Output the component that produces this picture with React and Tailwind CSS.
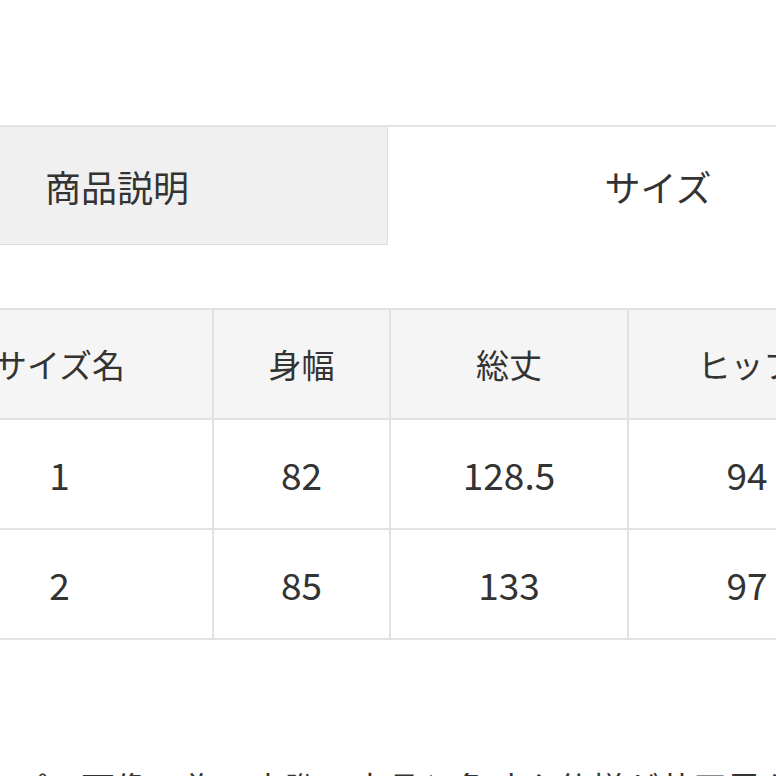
export default function App() {
  const font = { fontFamily: '"Noto Sans CJK JP", "Noto Sans", sans-serif' };
  const head = ["サイズ名", "身幅", "総丈", "ヒップ"];
  const rows = [
    ["1", "82", "128.5", "94"],
    ["2", "85", "133", "97"],
  ];
  const widths = ["w-[307px]", "w-[177px]", "w-[238px]", "w-[238px]"];
  return (
    <div className="w-[776px] h-[776px] overflow-hidden bg-white text-[#333]" style={font}>
      <div className="pt-[125px] ml-[-153px] w-[1200px]">
        <div className="flex border-t-2 border-[#e3e3e3]">
          <div className="w-[541px] h-[118px] bg-[#f0f0f0] border-r border-b border-[#dcdcdc] flex items-center justify-center text-[36px] leading-none">
            商品説明
          </div>
          <div className="w-[540px] h-[118px] bg-white flex items-center justify-center text-[36px] leading-none">
            サイズ
          </div>
        </div>
      </div>
      <div className="mt-[63px] ml-[-95px] w-max border-t-2 border-l-2 border-[#e2e2e2]">
        <div className="flex">
          {head.map((h, i) => (
            <div
              key={i}
              className={`${widths[i]} h-[110px] shrink-0 bg-[#f5f5f5] border-r-2 border-b-2 border-[#e2e2e2] flex items-center justify-center text-[33px] leading-none whitespace-nowrap`}
            >
              {h}
            </div>
          ))}
        </div>
        {rows.map((r, ri) => (
          <div key={ri} className="flex">
            {r.map((c, i) => (
              <div
                key={i}
                className={`${widths[i]} h-[110px] shrink-0 bg-white border-r-2 border-b-2 border-[#e2e2e2] flex items-center justify-center text-[37px] leading-none`}
              >
                {c}
              </div>
            ))}
          </div>
        ))}
      </div>
      <div className="mt-[131px] ml-[-20px] whitespace-nowrap text-[34px] leading-none">
        ンプル画像の為、実際の商品と色味や仕様が若干異なる場合がございます。
      </div>
    </div>
  );
}
